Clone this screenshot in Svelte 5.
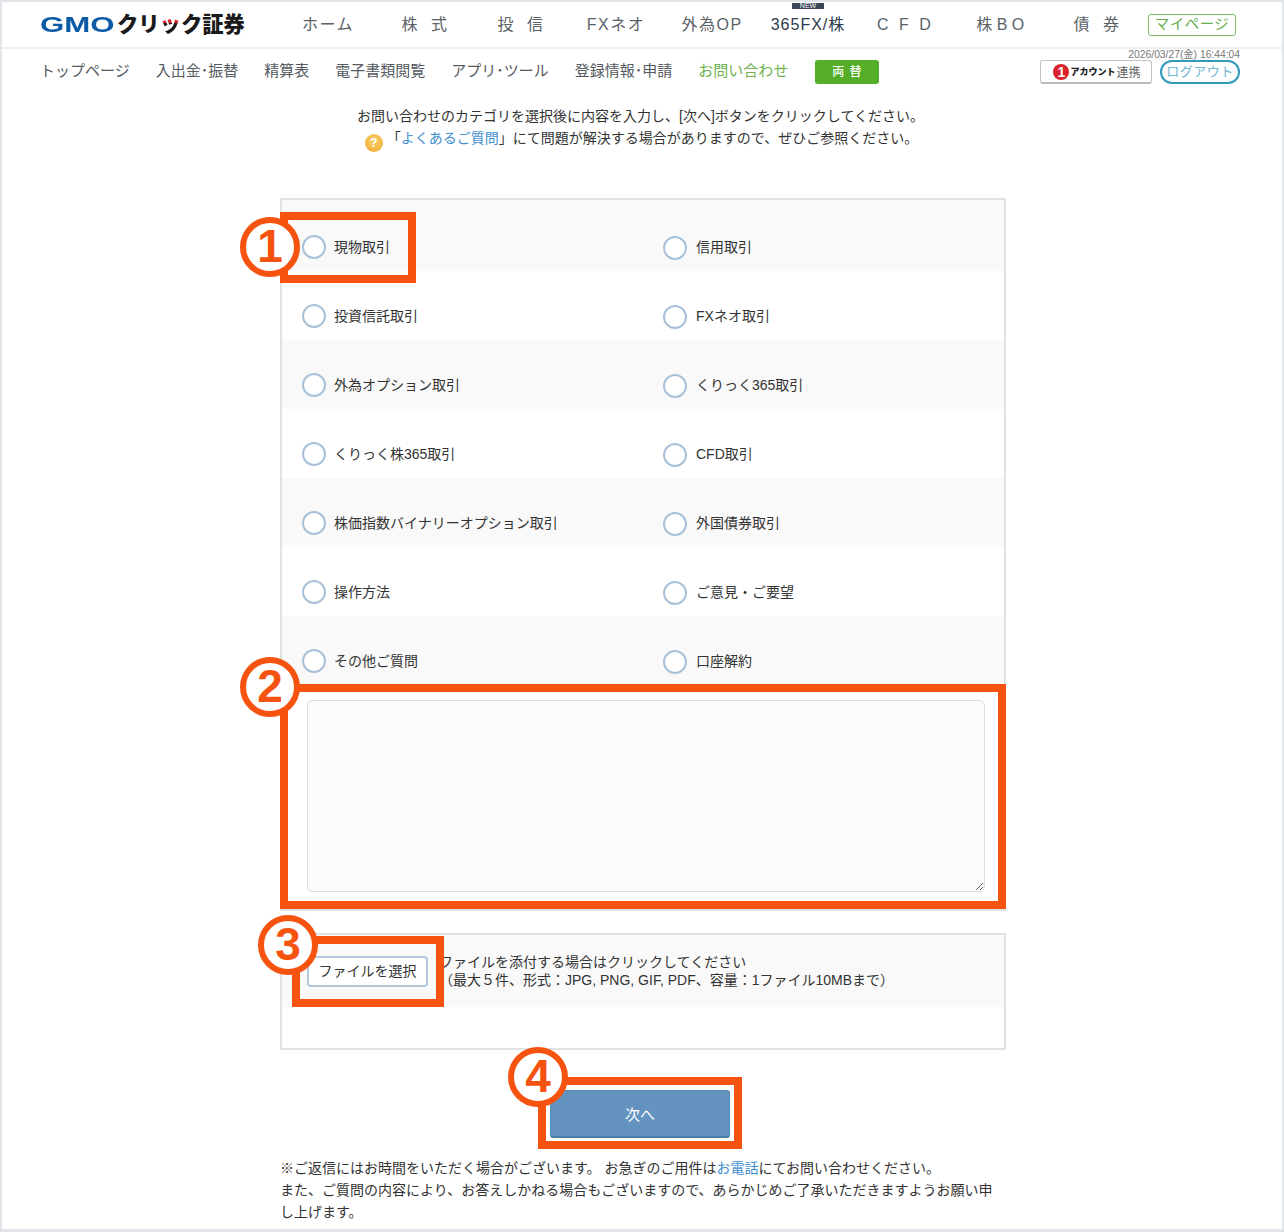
<script>
  const mainNav = [
    { label: 'ホーム', cls: 'kana' },
    { label: '株 式', cls: 'wide' },
    { label: '投 信', cls: 'wide' },
    { label: 'FXネオ', cls: 'kana' },
    { label: '外為OP', cls: 'kana' },
    { label: '365FX/株', cls: 'fx', isNew: true },
    { label: 'C F D', cls: 'cfd' },
    { label: '株BO', cls: 'bo' },
    { label: '債 券', cls: 'wide' },
  ];

  const subNav = ['トップページ', '入出金･振替', '精算表', '電子書類閲覧', 'アプリ･ツール', '登録情報･申請'];

  const categories = [
    ['現物取引', '信用取引'],
    ['投資信託取引', 'FXネオ取引'],
    ['外為オプション取引', 'くりっく365取引'],
    ['くりっく株365取引', 'CFD取引'],
    ['株価指数バイナリーオプション取引', '外国債券取引'],
    ['操作方法', 'ご意見・ご要望'],
    ['その他ご質問', '口座解約'],
  ];

  const marks = [1, 2, 3, 4];
</script>

<div class="shot">
  <div class="page">
    <header class="top">
      <div class="logo">
        <span class="gmo"><span>GMO</span></span>
        <span class="click">クリ<span class="red">ッ</span>ク証券</span>
      </div>
      <nav class="main-nav">
        {#each mainNav as item}
          <div class="nav-cell">
            {#if item.isNew}<span class="new">NEW</span>{/if}
            <span class={item.cls}>{item.label}</span>
          </div>
        {/each}
      </nav>
      <a class="mypage" href="#top">マイページ</a>
    </header>

    <div class="sub">
      {#each subNav as item}
        <span class="sub-item">{item}</span>
      {/each}
      <span class="sub-item current">お問い合わせ</span>
      <span class="exchange">両 替</span>
      <div class="account">
        <span class="stamp">2026/03/27(金) 16:44:04</span>
        <div class="account-btns">
          <span class="link-btn"><i class="one">1</i><b>アカウント</b>連携</span>
          <span class="logout">ログアウト</span>
        </div>
      </div>
    </div>

    <div class="intro">
      <p>お問い合わせのカテゴリを選択後に内容を入力し、[次へ]ボタンをクリックしてください。</p>
      <p class="faq"><span class="help">?</span>「<a href="#faq">よくあるご質問</a>」にて問題が解決する場合がありますので、ぜひご参照ください。</p>
    </div>

    <section class="panel">
      <div class="rows">
        {#each categories as row}
          <div class="row">
            {#each row as label}
              <label class="choice">
                <input type="radio" name="category" />
                <span>{label}</span>
              </label>
            {/each}
          </div>
        {/each}
      </div>
      <div class="body-wrap">
        <textarea></textarea>
      </div>
    </section>

    <section class="attach">
      <div class="attach-row">
        <button class="file-btn" type="button">ファイルを選択</button>
        <div class="attach-text">
          <div>ファイルを添付する場合はクリックしてください</div>
          <div>（最大５件、形式：JPG, PNG, GIF, PDF、容量：1ファイル10MBまで）</div>
        </div>
      </div>
    </section>

    <div class="next-wrap">
      <button class="next" type="button">次へ</button>
    </div>

    <p class="note">
      ※ご返信にはお時間をいただく場合がございます。 お急ぎのご用件は<a href="#tel">お電話</a>にてお問い合わせください。<br />
      また、ご質問の内容により、お答えしかねる場合もございますので、あらかじめご了承いただきますようお願い申し上げます。
    </p>
  </div>

  <!-- callouts drawn over the page -->
  <div class="box box1"></div>
  <div class="box box2"></div>
  <div class="box box3"></div>
  <div class="box box4"></div>
  {#each marks as n}
    <div class="ring ring{n}">{n}</div>
  {/each}
</div>

<style>
  :global(body) {
    margin: 0;
    background: #fff;
  }

  .shot {
    position: relative;
    width: 1284px;
    height: 1232px;
    overflow: hidden;
    font-family: "Liberation Sans", "Noto Sans CJK JP", sans-serif;
    color: #333;
  }

  .page {
    box-sizing: border-box;
    height: 1232px;
    border: 2px solid #e1e5ea;
    border-bottom-width: 3px;
  }

  a {
    color: #3f8fcf;
    text-decoration: none;
  }

  .top {
    display: flex;
    align-items: center;
    height: 45px;
    border-bottom: 2px solid #eceef0;
    padding-left: 38px;
  }

  .logo {
    display: flex;
    align-items: center;
    width: 240px;
    flex-shrink: 0;
  }

  .gmo {
    display: block;
    width: 77px;
    font: bold 22px/24px "Liberation Sans", sans-serif;
    color: #0b5aa6;
  }

  .gmo span {
    display: inline-block;
    transform: scaleX(1.42);
    transform-origin: left center;
  }

  .click {
    margin-top: -4px;
    font-family: "Noto Sans CJK JP", sans-serif;
    font-size: 21.3px;
    font-weight: 900;
    line-height: 24px;
    color: #1a1a1a;
  }

  .click .red {
    background: linear-gradient(#d8232a 52%, #1a1a1a 52%);
    -webkit-background-clip: text;
    background-clip: text;
    color: transparent;
  }

  .main-nav {
    display: grid;
    grid-template-columns: repeat(9, 96px);
  }

  .nav-cell {
    position: relative;
    text-align: center;
    font-size: 16px;
    line-height: 24px;
    color: #5b6268;
    white-space: nowrap;
  }

  .kana {
    letter-spacing: 1.5px;
  }

  .wide {
    letter-spacing: 4.5px;
    padding-left: 5px;
  }

  .cfd {
    letter-spacing: 3px;
    padding-left: 3px;
  }

  .bo {
    letter-spacing: 4.5px;
    padding-left: 5px;
  }

  .fx {
    color: #2c3a4e;
    letter-spacing: 1px;
  }

  .new {
    position: absolute;
    top: -10px;
    left: 32px;
    width: 32px;
    height: 6px;
    background: #3b4656;
    color: #fff;
    font: 7px/6px "Liberation Sans", sans-serif;
  }

  .mypage {
    box-sizing: border-box;
    width: 88px;
    height: 22px;
    margin-left: 4px;
    border: 1.5px solid #7fc06a;
    border-radius: 3px;
    color: #67b04e;
    font-size: 14.5px;
    line-height: 19px;
    text-align: center;
    letter-spacing: 0.5px;
  }

  .sub {
    display: flex;
    align-items: flex-start;
    gap: 26px;
    height: 56px;
    padding: 0 42px 0 38px;
  }

  .sub-item {
    margin-top: 10px;
    font-size: 15px;
    line-height: 24px;
    color: #555b60;
    white-space: nowrap;
  }

  .current {
    color: #6fb24f;
  }

  .exchange {
    box-sizing: border-box;
    width: 64px;
    height: 24px;
    margin-top: 11px;
    margin-left: 1px;
    border-radius: 3px;
    background: #55ae28;
    color: #fff;
    font-size: 12px;
    font-weight: 500;
    line-height: 24px;
    text-align: center;
    letter-spacing: 1px;
  }

  .account {
    margin-left: auto;
    display: flex;
    flex-direction: column;
    align-items: flex-end;
  }

  .stamp {
    font-size: 10.3px;
    line-height: 12px;
    color: #777;
    margin-top: 0;
  }

  .account-btns {
    display: flex;
    gap: 8px;
    margin-top: -1px;
  }

  .link-btn {
    box-sizing: border-box;
    display: flex;
    align-items: center;
    justify-content: center;
    width: 112px;
    height: 24px;
    padding-left: 2px;
    border: 1px solid #c3c6c9;
    border-bottom: 2px solid #b9bcc0;
    border-radius: 3px;
    font-size: 12px;
    color: #666;
  }

  .link-btn b {
    font-size: 9px;
    font-weight: 900;
    color: #222;
    margin-right: 1px;
  }

  .one {
    width: 16px;
    height: 16px;
    margin-right: 1px;
    border-radius: 50%;
    background: #d8232a;
    color: #fff;
    font: bold 14px/16px "Liberation Sans", sans-serif;
    text-align: center;
  }

  .logout {
    box-sizing: border-box;
    width: 80px;
    height: 24px;
    border: 2px solid #2d9cbf;
    border-radius: 12px;
    color: #6cb4cf;
    font-size: 13px;
    line-height: 19px;
    text-align: center;
    letter-spacing: 0.5px;
  }

  .intro {
    text-align: center;
    font-size: 14px;
    line-height: 22px;
    color: #333;
    padding-right: 3px;
    height: 44px;
  }

  .intro p {
    margin: 0;
  }

  .intro .faq {
    padding-left: 2px;
  }

  .help {
    display: inline-block;
    width: 18px;
    height: 18px;
    margin-right: 4px;
    border-radius: 50%;
    background: radial-gradient(circle at 50% 35%, #f9cf6b, #efa92c);
    color: #fff;
    font: bold 12px/18px "Liberation Sans", sans-serif;
    vertical-align: -4px;
  }

  .panel {
    box-sizing: border-box;
    width: 726px;
    height: 713px;
    margin: 49px 0 0 278px;
    border: 2px solid #dfe3e6;
  }

  .rows {
    padding-top: 2px;
    background: linear-gradient(#f9f9f9 2px, transparent 2px);
  }

  .row {
    box-sizing: border-box;
    display: grid;
    grid-template-columns: 361px 361px;
    align-items: center;
    height: 69px;
    padding-top: 21px;
  }

  .row:nth-child(odd) {
    background: #f9f9f9;
  }

  .choice {
    display: flex;
    align-items: center;
    gap: 8px;
    padding-left: 20px;
    font-size: 14px;
    color: #333;
  }

  .choice:nth-child(2) {
    gap: 9px;
  }

  .choice:nth-child(2) input {
    margin-top: 2px;
  }

  .choice input {
    appearance: none;
    box-sizing: border-box;
    width: 24px;
    height: 24px;
    margin: 0;
    border: 2px solid #a9c1d8;
    border-radius: 50%;
    background: #fff;
  }

  .choice span {
    margin-top: -2px;
  }

  .body-wrap {
    padding: 15px 19px 0 25px;
  }

  textarea {
    display: block;
    box-sizing: border-box;
    width: 678px;
    height: 192px;
    border: 1px solid #d9dde1;
    border-radius: 6px;
    background: #fbfbfb;
  }

  .attach {
    box-sizing: border-box;
    width: 726px;
    height: 117px;
    margin: 22px 0 0 278px;
    border: 2px solid #dfe3e6;
  }

  .attach-row {
    display: flex;
    align-items: flex-start;
    height: 72px;
    background: #f9f9f9;
    padding-left: 25px;
  }

  .file-btn {
    box-sizing: border-box;
    width: 121px;
    height: 31px;
    margin-top: 21px;
    padding: 0 0 4px;
    border: 2px solid #b5c9dd;
    border-radius: 4px;
    background: #fff;
    color: #333;
    font-family: inherit;
    font-size: 14px;
  }

  .attach-text {
    margin: 18px 0 0 11px;
    font-size: 14px;
    line-height: 18px;
    color: #333;
  }

  .next-wrap {
    display: flex;
    padding: 40px 0 0 548px;
  }

  .next {
    box-sizing: border-box;
    width: 180px;
    height: 48px;
    border: 1px solid #5a8ab6;
    border-bottom: 2px solid #4d7ba8;
    border-radius: 3px;
    background: #6493bf;
    color: #fff;
    font-family: inherit;
    font-size: 15px;
  }

  .note {
    width: 716px;
    margin: 19px 0 0 278px;
    font-size: 14px;
    line-height: 22px;
    color: #333;
  }

  .box {
    position: absolute;
    box-sizing: border-box;
    border: 8px solid #f65310;
  }

  .box1 { left: 280px; top: 212px; width: 136px; height: 71px; }
  .box2 { left: 280px; top: 684px; width: 726px; height: 225px; }
  .box3 { left: 292px; top: 936px; width: 152px; height: 71px; }
  .box4 { left: 538px; top: 1077px; width: 204px; height: 72px; }

  .ring {
    position: absolute;
    box-sizing: border-box;
    width: 60px;
    height: 60px;
    border: 6px solid #f65310;
    border-radius: 50%;
    background: #fff;
    color: #f65310;
    font: bold 46px/47px "Liberation Sans", sans-serif;
    text-align: center;
  }

  .ring1 { left: 240px; top: 217px; }
  .ring2 { left: 240px; top: 657px; }
  .ring3 { left: 258px; top: 915px; }
  .ring4 { left: 508px; top: 1047px; }
</style>
